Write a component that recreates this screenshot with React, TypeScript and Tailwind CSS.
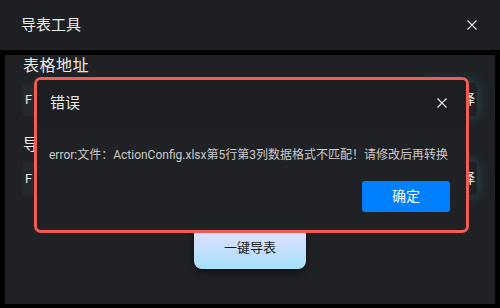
import React from 'react';

const font = { fontFamily: 'Roboto, "Noto Sans CJK SC", sans-serif' };

const CloseIcon: React.FC<{ size?: number }> = ({ size = 10 }) => (
  <svg width={size} height={size} viewBox="0 0 10 10" fill="none">
    <path d="M0.5 0.5L9.5 9.5M9.5 0.5L0.5 9.5" stroke="#e6e6e6" strokeWidth="1.2" />
  </svg>
);

const PathRow: React.FC<{ label: string; value: string; first?: boolean }> = ({ label, value, first }) => (
  <div className={first ? 'mt-[4px]' : 'mt-[18px]'}>
    <div className="text-[16px] leading-[22px] text-[#ececec] tracking-[0.5px]">{label}</div>
    <div className="mt-[6px] flex items-center gap-[8px]">
      <div className="flex h-[33px] flex-1 items-center bg-[#27282b] pl-[2px] text-[13px] text-[#e6e6e6]">{value}</div>
      <button className="h-[33px] w-[52px] rounded-[4px] bg-[#202124] pr-[2px] text-right text-[14px] text-white shadow-[0_0_14px_rgba(40,150,170,0.45)]">
        选择
      </button>
    </div>
  </div>
);

export default function App() {
  return (
    <div className="relative h-[308px] w-[500px] overflow-hidden bg-black" style={font}>
      <div className="flex h-[50px] items-center justify-between bg-[#1e1f22] pl-[21px] pr-[23px]">
        <span className="text-[15px] text-[#ececec]">导表工具</span>
        <CloseIcon />
      </div>

      <div className="mx-[5px] mt-[5px] h-[249px] bg-[#202124] px-[18px]">
        <PathRow first label="表格地址" value="F" />
        <PathRow label="导出地址" value="F" />
        <div className="mt-[31px] flex justify-center">
          <button className="h-[43px] w-[112px] rounded-[8px] bg-gradient-to-b from-[#e6e0ff] to-[#a3e0fd] text-[13px] text-[#1c1c1c] shadow-[0_3px_6px_rgba(0,0,0,0.6)]">
            一键导表
          </button>
        </div>
      </div>

      <div className="absolute left-[34px] top-[77px] flex h-[156px] w-[435px] flex-col overflow-hidden rounded-[7px] border-[3px] border-[#f25c54] bg-[#202124]">
        <div className="flex h-[46px] shrink-0 items-center justify-between bg-[#1d1e21] pl-[13px] pr-[19px]">
          <span className="text-[15px] text-[#ececec]">错误</span>
          <CloseIcon />
        </div>
        <div className="flex flex-1 flex-col pl-[12px] pr-[16px] pt-[20px]">
          <p className="whitespace-nowrap text-[12px] leading-[18px] text-[#c9cacd]">
            error:文件：ActionConfig.xlsx第5行第3列数据格式不匹配！请修改后再转换
          </p>
          <div className="mt-[17px] flex justify-end">
            <button className="h-[31px] w-[88px] rounded-[3px] bg-[#0080ff] text-[14px] text-white">确定</button>
          </div>
        </div>
      </div>
    </div>
  );
}
